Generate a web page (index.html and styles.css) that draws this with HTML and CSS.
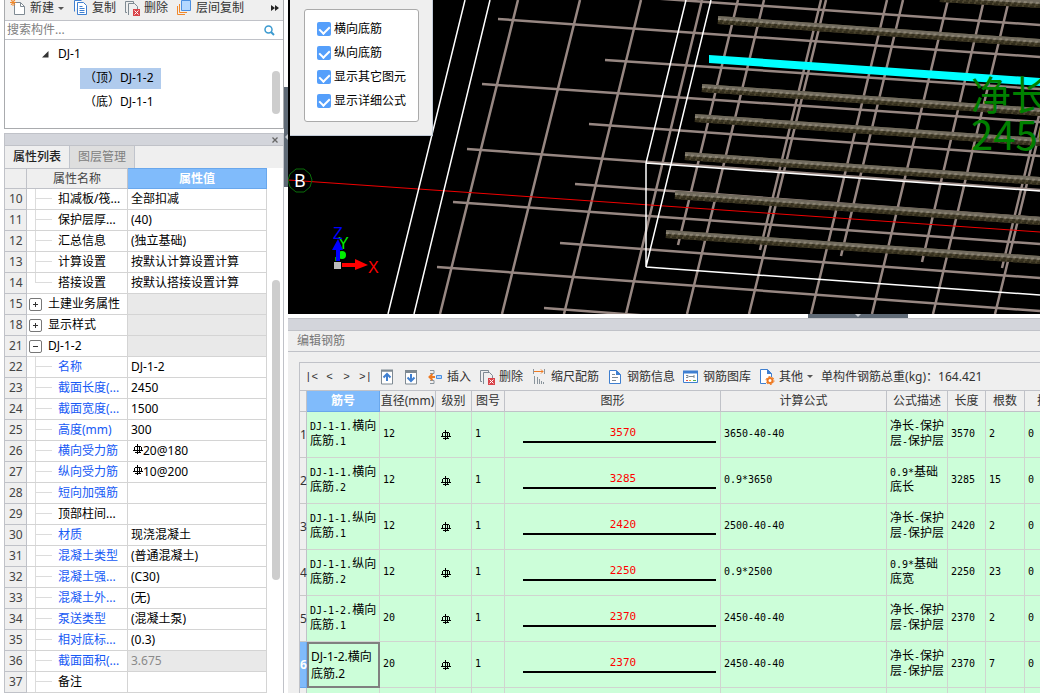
FILE: index.html
```html
<!DOCTYPE html>
<html lang="zh-CN">
<head>
    <meta charset="UTF-8">
    <meta name="viewport" content="width=device-width, initial-scale=1.0">
    <title>编辑钢筋</title>
    <link rel="stylesheet" href="styles.css">
</head>
<body>
    <svg class="defs" width="0" height="0" aria-hidden="true">
        <!-- rebar grade mark -->
        <symbol id="grade" viewBox="0 0 10 10">
            <path d="M4.500 0v10M6.500 2v7M2 2.500h6M1.500 3v3M8.500 3v3M0 6.500h10M2 8.500h6" fill="none" stroke="currentColor" stroke-width="1"/>
        </symbol>
        <symbol id="copy" viewBox="0 0 16 16">
            <path d="M2.500 11.500v-11h7M5.500 2.500h6l3 3v9h-9z" fill="#fff" stroke="#3f7fd0"/>
            <path d="M7.500 6.500h3M7.500 8.500h5M7.500 10.500h5M7.500 12.500h5" stroke="#3f7fd0"/>
        </symbol>
        <symbol id="delete" viewBox="0 0 16 16">
            <path d="M3 12.500H1.500v-11h8v2M4.500 15V3.500h6l3 3V9" fill="none" stroke="#7f8a93"/>
            <path d="M9 9h7v7H9z" fill="#d9444a"/>
            <path d="M10.500 10.500l4 4M14.500 10.500l-4 4" stroke="#fff"/>
        </symbol>
    </svg>

    <div class="workspace">
        <aside class="left-panel">
            <section class="component-list">
                <div class="list-toolbar">
                    <button type="button" class="tool-btn">
                        <svg width="16" height="16" viewBox="0 0 16 16"><path d="M4.500 2.500h6l4 4v8h-10z" fill="#fff" stroke="#7f8a93"/><path d="M10.500 2.500v4h4" fill="none" stroke="#7f8a93"/><path d="M1 0l4 5M5 0L1 5M3-1v7M0 2.500h6" stroke="#f0882c"/></svg>
                        新建
                        <span class="caret"></span>
                    </button>
                    <button type="button" class="tool-btn"><svg width="16" height="16"><use href="#copy"/></svg>复制</button>
                    <button type="button" class="tool-btn"><svg width="16" height="16"><use href="#delete"/></svg>删除</button>
                    <button type="button" class="tool-btn">
                        <svg width="16" height="16" viewBox="0 0 16 16"><path d="M5.500 0.500h9v10h-9z" fill="#b3d7ff" stroke="#4a8ee0"/><path d="M3.500 4v8.500H11M1.500 6v8.500H9" fill="none" stroke="#f0882c"/></svg>
                        层间复制
                    </button>
                    <button type="button" class="more-btn" aria-label="更多">
                        <svg width="8" height="6" viewBox="0 0 8 6"><path d="M0 0l4 3-4 3zM4 0l4 3-4 3z" fill="#222"/></svg>
                    </button>
                </div>
                <div class="search">
                    <input type="text" class="search-input" placeholder="搜索构件..." aria-label="搜索构件">
                    <svg width="11" height="11" viewBox="0 0 11 11"><circle cx="4.500" cy="4.500" r="3.500" fill="none" stroke="#3b9ad0" stroke-width="1.500"/><path d="M7 7l3 3" stroke="#3b9ad0" stroke-width="2"/></svg>
                </div>
                <div class="tree">
                    <div class="tree-row tree-parent">
                        <svg width="7" height="7" viewBox="0 0 7 7"><path d="M6.500 0v6.500H0z" fill="#333"/></svg>
                        DJ-1
                    </div>
                    <div class="tree-row tree-child"><span class="tree-item selected">（顶）DJ-1-2</span></div>
                    <div class="tree-row tree-child"><span class="tree-item">（底）DJ-1-1</span></div>
                    <div class="scroll-thumb tree-thumb"></div>
                </div>
            </section>

            <section class="properties">
                <div class="panel-bar">
                    <button type="button" class="close-btn" aria-label="关闭"><svg width="6" height="6" viewBox="0 0 6 6"><path d="M0.500 0.500l5 5M5.500 0.500l-5 5" stroke="#666" stroke-width="1.300"/></svg></button>
                </div>
                <div class="tabs">
                    <button type="button" class="tab active">属性列表</button>
                    <button type="button" class="tab">图层管理</button>
                </div>
                <div class="property-body">
                    <table class="property-table">
                        <colgroup><col class="c-num"><col class="c-name"><col class="c-value"></colgroup>
                        <thead>
                            <tr><th></th><th>属性名称</th><th class="active">属性值</th></tr>
                        </thead>
                        <tbody>
                            <tr><th>10</th><td class="leaf">扣减板/筏...</td><td>全部扣减</td></tr>
                            <tr><th>11</th><td class="leaf">保护层厚...</td><td>(40)</td></tr>
                            <tr><th>12</th><td class="leaf">汇总信息</td><td>(独立基础)</td></tr>
                            <tr><th>13</th><td class="leaf">计算设置</td><td>按默认计算设置计算</td></tr>
                            <tr><th>14</th><td class="leaf last">搭接设置</td><td>按默认搭接设置计算</td></tr>
                            <tr><th>15</th><td class="group"><button type="button" class="expander" aria-label="展开"></button>土建业务属性</td><td class="disabled"></td></tr>
                            <tr><th>18</th><td class="group"><button type="button" class="expander" aria-label="展开"></button>显示样式</td><td class="disabled"></td></tr>
                            <tr><th>21</th><td class="group"><button type="button" class="expander open" aria-label="收起"></button>DJ-1-2</td><td class="disabled"></td></tr>
                            <tr><th>22</th><td class="leaf key">名称</td><td>DJ-1-2</td></tr>
                            <tr><th>23</th><td class="leaf key">截面长度(...</td><td>2450</td></tr>
                            <tr><th>24</th><td class="leaf key">截面宽度(...</td><td>1500</td></tr>
                            <tr><th>25</th><td class="leaf key">高度(mm)</td><td>300</td></tr>
                            <tr><th>26</th><td class="leaf key">横向受力筋</td><td><svg class="grade" width="10" height="10"><use href="#grade"/></svg>20@180</td></tr>
                            <tr><th>27</th><td class="leaf key">纵向受力筋</td><td><svg class="grade" width="10" height="10"><use href="#grade"/></svg>10@200</td></tr>
                            <tr><th>28</th><td class="leaf key">短向加强筋</td><td></td></tr>
                            <tr><th>29</th><td class="leaf">顶部柱间...</td><td></td></tr>
                            <tr><th>30</th><td class="leaf key">材质</td><td>现浇混凝土</td></tr>
                            <tr><th>31</th><td class="leaf key">混凝土类型</td><td>(普通混凝土)</td></tr>
                            <tr><th>32</th><td class="leaf key">混凝土强...</td><td>(C30)</td></tr>
                            <tr><th>33</th><td class="leaf key">混凝土外...</td><td>(无)</td></tr>
                            <tr><th>34</th><td class="leaf key">泵送类型</td><td>(混凝土泵)</td></tr>
                            <tr><th>35</th><td class="leaf key">相对底标...</td><td>(0.3)</td></tr>
                            <tr><th>36</th><td class="leaf key">截面面积(...</td><td class="disabled">3.675</td></tr>
                            <tr><th>37</th><td class="leaf">备注</td><td></td></tr>
                        </tbody>
                    </table>
                    <div class="scroll-thumb property-thumb"></div>
                </div>
            </section>
        </aside>

        <div class="splitter-v">
            <button type="button" class="splitter-handle-v" aria-label="折叠左侧"><svg width="4" height="6" viewBox="0 0 4 6"><path d="M4 0v6L1 3z" fill="#c5cad0"/></svg></button>
        </div>

        <main class="main">
            <div class="scene">
                <svg class="scene-canvas" viewBox="288 0 752 314" preserveAspectRatio="xMinYMin slice">
                    <defs>
                        <path id="bars" d="M940-2L1040 4M718 20L1040 43M702 88L1040 112M695 118L1040 142M685 156L1040 181M675 195L1040 221M666 234L1040 260"/>
                    </defs>
                    <g stroke="#978782" stroke-width="2.500">
                        <path d="M518 0L440 314M580 0L502 314M641 0L564 314M702 0L626 314M764 0L687 314M826 0L749 314M887 0L811 314M948 0L872 314M1009 0L933 314M1072 0L995 314"/>
                        <path d="M738 0L678 245M821 0L760 250M903 0L841 256M984 0L922 262M1067 0L1002 268"/>
                        <path d="M620-4L1040 25M498 19L1040 57M605 60L1040 89M482 84L1040 122M589 124L1040 156M467 149L1040 190M575 184L1040 218M453 202L1040 244M560 243L1040 278M437 267L1040 311M544 308L1040 345"/>
                    </g>
                    <path d="M288 180L1040 232" stroke="#f00000" stroke-width="1"/>
                    <!-- footing outline -->
                    <path d="M465 0L388 314M490 0L414 314M686 0L646 163V267L711 0M646 163L1040 191M646 267L1040 295" fill="none" stroke="#fff" stroke-width="1.500"/>
                    <!-- ribbed bars: body, lit top, ribs -->
                    <g fill="none">
                        <use href="#bars" stroke="#4c452f" stroke-width="8"/>
                        <use href="#bars" y="-2" stroke="#716b5e" stroke-width="4"/>
                        <use href="#bars" y="-1" stroke="#8b8474" stroke-width="2" stroke-dasharray="3 3"/>
                        <use href="#bars" x="2" y="1" stroke="#35301f" stroke-width="2" stroke-dasharray="3 3"/>
                        <use href="#bars" y="3" stroke="#302b1a" stroke-width="2" stroke-dasharray="4 2"/>
                    </g>
                    <path d="M709 55L1040 78v8L709 63z" fill="#00ffff"/>
                    <g class="formula">
                        <text x="971" y="110">净长</text>
                        <text x="971" y="150">2450</text>
                    </g>
                    <!-- axis B -->
                    <path d="M296 169h8l6 5 2 6-2 7-6 5h-8l-6-5-2-7 2-6z" fill="none" stroke="#0a6e0a"/>
                    <text class="axis-name" x="294" y="187">B</text>
                    <!-- coordinate gizmo -->
                    <g class="gizmo">
                        <text x="338" y="249" fill="#00f000">Y</text>
                        <circle cx="342" cy="255" r="4" fill="#00f000"/>
                        <path d="M335 257h3v4h-3z" fill="#00a000"/>
                        <text x="333" y="239" fill="#0000ff">Z</text>
                        <path d="M336 261v-11h-4l6-11 5 11h-3v11z" fill="#0000ff"/>
                        <path d="M342 263h13v-4l13 6-13 5v-3h-13z" fill="#ff0000"/>
                        <path d="M334 262h7v7h-7z" fill="#bbb"/>
                        <text x="368" y="273" fill="#ff0000">X</text>
                    </g>
                </svg>
                <div class="display-panel">
                    <div class="display-options">
                        <label class="option"><input type="checkbox" checked>横向底筋</label>
                        <label class="option"><input type="checkbox" checked>纵向底筋</label>
                        <label class="option"><input type="checkbox" checked>显示其它图元</label>
                        <label class="option"><input type="checkbox" checked>显示详细公式</label>
                    </div>
                </div>
            </div>

            <div class="splitter-h">
                <button type="button" class="splitter-handle-h" aria-label="折叠底部"><svg width="6" height="4" viewBox="0 0 6 4"><path d="M0 0h6L3 3z" fill="#c5cad0"/></svg></button>
            </div>

            <section class="rebar-editor">
                <div class="panel-bar"></div>
                <h2 class="editor-title">编辑钢筋</h2>
                <div class="editor-body">
                    <div class="editor-toolbar">
                        <button type="button" class="nav-btn wide">|&lt;</button>
                        <button type="button" class="nav-btn">&lt;</button>
                        <button type="button" class="nav-btn">&gt;</button>
                        <button type="button" class="nav-btn wide">&gt;|</button>
                        <button type="button" class="tool-btn" aria-label="上移"><svg width="16" height="16" viewBox="0 0 16 16"><path d="M2.500 2h11v13h-11z" fill="#fff" stroke="#7f8a93"/><path d="M2 1.500h12" stroke="#7f8a93" stroke-width="2"/><path d="M8 12V6M4.500 8.500L8 5l3.500 3.500" fill="none" stroke="#3f7fd0" stroke-width="2"/></svg></button>
                        <button type="button" class="tool-btn" aria-label="下移"><svg width="16" height="16" viewBox="0 0 16 16"><path d="M2.500 2h11v13h-11z" fill="#fff" stroke="#7f8a93"/><path d="M2 2.500h12" stroke="#7f8a93" stroke-width="3"/><path d="M8 5v6M4.500 8.500L8 12l3.500-3.500" fill="none" stroke="#3f7fd0" stroke-width="2"/></svg></button>
                        <button type="button" class="tool-btn"><svg width="16" height="16" viewBox="0 0 16 16"><path d="M3 1.500h4v3H3M3 14.500h4v-3H3" fill="none" stroke="#8a949c"/><path d="M9.500 6.500h5v3h-5z" fill="#b3d7ff" stroke="#4a8ee0"/><path d="M8 8H3M5.500 5L2.500 8l3 3" fill="none" stroke="#ee7a22" stroke-width="2"/></svg>插入</button>
                        <button type="button" class="tool-btn"><svg width="16" height="16"><use href="#delete"/></svg>删除</button>
                        <button type="button" class="tool-btn"><svg width="16" height="16" viewBox="0 0 16 16"><path d="M3.500 7v8M6.500 8v7M8.500 10v5M10.500 12v3M12.500 13v2" stroke="#8a949c"/><path d="M2.500 0v5M13.500 0v5" stroke="#8a949c"/><path d="M3 2.500h9M10 0.500l2 2-2 2" fill="none" stroke="#ee7a22"/></svg>缩尺配筋</button>
                        <button type="button" class="tool-btn"><svg width="16" height="16" viewBox="0 0 16 16"><path d="M2.500 1.500h7l4 4v9h-11z" fill="#fff" stroke="#3f7fd0"/><path d="M9 1v5h5z" fill="#3f7fd0"/><path d="M5 5.500h3M5 8.500h6M5 11.500h4" stroke="#7f8a93"/></svg>钢筋信息</button>
                        <button type="button" class="tool-btn"><svg width="16" height="16" viewBox="0 0 16 16"><path d="M0.500 2.500h14v11h-14z" fill="#fff" stroke="#3f7fd0"/><path d="M0 3h15" stroke="#3f7fd0" stroke-width="3"/><path d="M3 6.500h2v2H3M6 7.500h5M11 6v3" fill="none" stroke="#7f8a93"/><path d="M3 11.500h2" stroke="#e05050"/><path d="M6 11.500h2" stroke="#e0b030"/><path d="M10 11.500h3" stroke="#50b050"/></svg>钢筋图库</button>
                        <button type="button" class="tool-btn">
                            <svg width="16" height="16" viewBox="0 0 16 16"><path d="M7 14.500H1.500v-14h7l4 4V8" fill="#fff" stroke="#3f7fd0"/><path d="M8 0v5h5z" fill="#3f7fd0"/><circle cx="11" cy="11.500" r="2.500" fill="#fff" stroke="#ee7a22" stroke-width="2"/><circle cx="11" cy="11.500" r="4" fill="none" stroke="#ee7a22" stroke-dasharray="2 2.200"/></svg>
                            其他
                            <span class="caret"></span>
                        </button>
                        <span class="total-weight">单构件钢筋总重(kg)：164.421</span>
                    </div>
                    <table class="rebar-table">
                        <colgroup>
                            <col class="r-index"><col class="r-name"><col class="r-dia"><col class="r-grade"><col class="r-shape-no"><col class="r-shape"><col class="r-formula"><col class="r-desc"><col class="r-length"><col class="r-count"><col class="r-lap">
                        </colgroup>
                        <thead>
                            <tr><th></th><th class="active">筋号</th><th>直径(mm)</th><th>级别</th><th>图号</th><th>图形</th><th>计算公式</th><th>公式描述</th><th>长度</th><th>根数</th><th>搭接</th></tr>
                        </thead>
                        <tbody>
                            <tr>
                                <th>1</th><td>DJ-1-1.<span class="cn">横向底筋</span>.1</td><td>12</td><td class="mark"><svg class="grade" width="10" height="10"><use href="#grade"/></svg></td><td>1</td>
                                <td class="shape"><div class="shape-bar">3570</div></td><td>3650-40-40</td><td><span class="cn">净长</span>-<span class="cn">保护层</span>-<span class="cn">保护层</span></td><td>3570</td><td>2</td><td>0</td>
                            </tr>
                            <tr>
                                <th>2</th><td>DJ-1-1.<span class="cn">横向底筋</span>.2</td><td>12</td><td class="mark"><svg class="grade" width="10" height="10"><use href="#grade"/></svg></td><td>1</td>
                                <td class="shape"><div class="shape-bar">3285</div></td><td>0.9*3650</td><td>0.9*<span class="cn">基础底长</span></td><td>3285</td><td>15</td><td>0</td>
                            </tr>
                            <tr>
                                <th>3</th><td>DJ-1-1.<span class="cn">纵向底筋</span>.1</td><td>12</td><td class="mark"><svg class="grade" width="10" height="10"><use href="#grade"/></svg></td><td>1</td>
                                <td class="shape"><div class="shape-bar">2420</div></td><td>2500-40-40</td><td><span class="cn">净长</span>-<span class="cn">保护层</span>-<span class="cn">保护层</span></td><td>2420</td><td>2</td><td>0</td>
                            </tr>
                            <tr>
                                <th>4</th><td>DJ-1-1.<span class="cn">纵向底筋</span>.2</td><td>12</td><td class="mark"><svg class="grade" width="10" height="10"><use href="#grade"/></svg></td><td>1</td>
                                <td class="shape"><div class="shape-bar">2250</div></td><td>0.9*2500</td><td>0.9*<span class="cn">基础底宽</span></td><td>2250</td><td>23</td><td>0</td>
                            </tr>
                            <tr>
                                <th>5</th><td>DJ-1-2.<span class="cn">横向底筋</span>.1</td><td>20</td><td class="mark"><svg class="grade" width="10" height="10"><use href="#grade"/></svg></td><td>1</td>
                                <td class="shape"><div class="shape-bar">2370</div></td><td>2450-40-40</td><td><span class="cn">净长</span>-<span class="cn">保护层</span>-<span class="cn">保护层</span></td><td>2370</td><td>2</td><td>0</td>
                            </tr>
                            <tr>
                                <th class="active">6</th><td class="editing">DJ-1-2.横向底筋.2</td><td>20</td><td class="mark"><svg class="grade" width="10" height="10"><use href="#grade"/></svg></td><td>1</td>
                                <td class="shape"><div class="shape-bar">2370</div></td><td>2450-40-40</td><td><span class="cn">净长</span>-<span class="cn">保护层</span>-<span class="cn">保护层</span></td><td>2370</td><td>7</td><td>0</td>
                            </tr>
                            <tr><th></th><td></td><td></td><td></td><td></td><td></td><td></td><td></td><td></td><td></td><td></td></tr>
                        </tbody>
                    </table>
                </div>
            </section>
        </main>
    </div>
</body>
</html>
```

FILE: styles.css
```css
* {
    margin: 0;
    padding: 0;
    box-sizing: border-box;
}

body {
    font-family: "Noto Sans", "Noto Sans CJK SC", sans-serif;
    font-size: 12px;
    line-height: 18px;
    color: #333;
    background: #fff;
    overflow: hidden;
}

button {
    font: inherit;
    color: inherit;
    background: none;
    border: none;
    white-space: nowrap;
}

svg {
    display: block;
    flex: none;
}

.defs {
    position: absolute;
}

.workspace {
    display: flex;
    height: 100vh;
}

/* left side */
.left-panel {
    width: 280px;
    margin-left: 4px;
    flex: none;
    display: flex;
    flex-direction: column;
    gap: 4px;
}

.component-list {
    border: 1px solid #a9abae;
    border-top: none;
}

.list-toolbar {
    height: 21px;
    padding: 0 4px 4px 5px;
    display: flex;
    align-items: center;
    gap: 8px;
    background: #efefef;
    border-bottom: 1px solid #c0c2c8;
}

.tool-btn {
    display: flex;
    align-items: center;
    gap: 4px;
}

.caret {
    border: 3px solid transparent;
    border-top-color: #555;
    border-bottom: none;
}

.more-btn {
    margin-left: auto;
}

.search {
    height: 19px;
    padding: 0 8px 0 2px;
    display: flex;
    align-items: center;
    border-bottom: 1px solid #c0c2c8;
}

.search-input {
    flex: 1;
    min-width: 0;
    border: none;
    outline: none;
    font: inherit;
}

.search-input::placeholder {
    color: #808080;
}

.tree {
    height: 88px;
    padding-top: 2px;
    position: relative;
    color: #000;
}

.tree-row {
    height: 24px;
    display: flex;
    align-items: center;
}

.tree-parent {
    padding-left: 37px;
    gap: 9px;
}

.tree-child {
    padding-left: 75px;
}

.tree-item {
    padding: 1px 7px 2px 4px;
}

.tree-item.selected {
    background: #b0cbed;
}

.scroll-thumb {
    position: absolute;
    right: 3px;
    width: 8px;
    border-radius: 4px;
    background: #cdcdcd;
}

.tree-thumb {
    top: 31px;
    height: 43px;
}

.properties {
    flex: 1;
    min-height: 0;
    display: flex;
    flex-direction: column;
    border: 1px solid #c0c2c8;
    border-bottom: none;
}

.panel-bar {
    height: 12px;
    flex: none;
    padding-right: 5px;
    display: flex;
    align-items: center;
    justify-content: flex-end;
    background: #d3d5db;
    border-bottom: 1px solid #c0c2c8;
}

.tabs {
    height: 22px;
    flex: none;
    display: flex;
    background: #efefef;
}

.tab {
    width: 65px;
    color: #808080;
    background: #dedede;
    border-right: 1px solid #c0c4cc;
}

.tab.active {
    color: #222;
    background: #efefef;
    font-weight: 500;
}

.property-body {
    flex: 1;
    min-height: 0;
    overflow: hidden;
    position: relative;
}

.property-table {
    width: 262px;
    table-layout: fixed;
    border-collapse: separate;
    border-spacing: 0;
    color: #000;
}

.c-num {
    width: 22px;
}

.c-name {
    width: 101px;
}

.property-table th,
.property-table td {
    height: 21px;
    border-right: 1px solid #d4d4d4;
    border-bottom: 1px solid #d4d4d4;
    line-height: 18px;
    text-align: left;
    font-weight: normal;
    white-space: nowrap;
}

.property-table th {
    padding-left: 4px;
    color: #444;
    background: #efefef;
    border-color: #c0c2c8;
}

.property-table thead th {
    padding: 0;
    text-align: center;
    border-top: 1px solid #c0c2c8;
}

.property-table th.active,
.rebar-table th.active {
    color: #fff;
    font-weight: bold;
    background: #80bbfb;
    border-color: #69a7ec;
}

.property-table td {
    padding-left: 3px;
}

.property-table td.leaf {
    padding-left: 31px;
    background:
        linear-gradient(#dcdcdc, #dcdcdc) 8px 0 / 1px 100% no-repeat,
        linear-gradient(#dcdcdc, #dcdcdc) 8px 9px / 17px 1px no-repeat;
}

.property-table td.last {
    background-size: 1px 10px, 17px 1px;
}

.property-table td.key {
    color: #1659f5;
}

.property-table td.group {
    padding-left: 2px;
}

.property-table td.disabled {
    color: #8a8a8a;
    background: #e9e9e9;
}

.property-table .grade {
    display: inline-block;
    margin-left: 2px;
    vertical-align: 1px;
}

.expander {
    width: 13px;
    height: 13px;
    margin-right: 6px;
    vertical-align: -2px;
    border: 1px solid #777;
    border-radius: 2px;
    background:
        linear-gradient(#333, #333) center / 5px 1px no-repeat,
        linear-gradient(#333, #333) center / 1px 5px no-repeat;
}

.expander.open {
    background-size: 5px 1px, 0 0;
}

.property-thumb {
    top: 112px;
    height: 300px;
}

/* splitters */
.splitter-v {
    width: 4px;
    flex: none;
    padding-top: 87px;
}

.splitter-handle-v {
    width: 4px;
    height: 100px;
    background: #5f6a76;
}

.splitter-h {
    height: 4px;
    flex: none;
    padding-left: 388px;
    display: flex;
    justify-content: center;
}

.splitter-handle-h {
    width: 100px;
    height: 4px;
    display: flex;
    justify-content: center;
    background: #5f6a76;
}

/* right side */
.main {
    flex: 1;
    min-width: 0;
    display: flex;
    flex-direction: column;
}

.scene {
    height: 314px;
    flex: none;
    position: relative;
    overflow: hidden;
    background: #000;
}

.scene-canvas {
    width: 100%;
    height: 100%;
}

.formula {
    font-family: "Noto Sans CJK SC", sans-serif;
    font-size: 40px;
    fill: #008000;
}

.axis-name {
    font-size: 18px;
    fill: #fff;
}

.gizmo {
    font-family: "Liberation Sans", Arial, sans-serif;
    font-size: 16px;
}

.display-panel {
    position: absolute;
    top: 0;
    left: 2px;
    padding: 9px 13px 13px 14px;
    background: #efefef;
    border: 1px solid #c3ccd8;
    border-top: none;
    border-left: none;
}

.display-options {
    width: 115px;
    padding: 7px 0 8px 12px;
    background: #fff;
    border: 1px solid #aaa;
    border-radius: 3px;
    color: #000;
}

.option {
    height: 24px;
    display: flex;
    align-items: center;
    gap: 3px;
}

.option input {
    appearance: none;
    width: 14px;
    height: 14px;
    border-radius: 2px;
    background: #559ffb;
    display: flex;
    justify-content: center;
}

.option input:checked::after {
    content: "";
    width: 5px;
    height: 8px;
    margin-top: 2px;
    border: solid #fff;
    border-width: 0 2px 2px 0;
    transform: rotate(45deg);
}

.rebar-editor {
    flex: 1;
    min-height: 0;
    display: flex;
    flex-direction: column;
    background: #efefef;
    border-top: 1px solid #c0c2c8;
}

.editor-title {
    height: 21px;
    flex: none;
    padding-left: 9px;
    font-size: 12px;
    font-weight: normal;
    line-height: 20px;
    color: #777;
    border-bottom: 1px solid #c0c2c8;
}

.editor-body {
    flex: 1;
    min-height: 0;
    margin: 10px 0 0 11px;
    overflow: hidden;
    border: 1px solid #c0c2c8;
    border-right: none;
    border-bottom: none;
}

.editor-toolbar {
    height: 27px;
    padding-left: 5px;
    display: flex;
    align-items: center;
    gap: 8px;
}

.nav-btn {
    width: 9px;
    font-family: "Liberation Mono", monospace;
    font-size: 11px;
}

.nav-btn.wide {
    width: 12px;
}

.total-weight {
    white-space: nowrap;
}

.rebar-table {
    width: 774px;
    table-layout: fixed;
    border-collapse: separate;
    border-spacing: 0;
    border-top: 1px solid #c0c2c8;
}

.r-index { width: 7px; }
.r-name { width: 73px; }
.r-dia { width: 56px; }
.r-grade { width: 36px; }
.r-shape-no { width: 33px; }
.r-shape { width: 216px; }
.r-formula { width: 166px; }
.r-desc { width: 61px; }
.r-length { width: 38px; }
.r-count { width: 39px; }

.rebar-table th {
    font-weight: normal;
    background: #efefef;
    border-right: 1px solid #c0c2c8;
    white-space: nowrap;
}

.rebar-table thead th {
    height: 21px;
    border-bottom: 1px solid #c0c2c8;
}

.rebar-table tbody th {
    border-bottom: 1px solid #c8c8c8;
}

.rebar-table td {
    height: 46px;
    padding: 0 1px 2px 3px;
    font-family: "DejaVu Sans Mono", "Noto Sans CJK SC", monospace;
    font-size: 10px;
    line-height: 14px;
    color: #000;
    background: #ccfed9;
    border-right: 1px solid #d0d4d0;
    border-bottom: 1px solid #d0d4d0;
}

.rebar-table .cn {
    font-size: 12px;
}

.rebar-table td.editing {
    padding: 0 0 0 2px;
    border: 2px solid #808080;
    font-family: inherit;
    font-size: 12px;
    line-height: 17px;
}

.rebar-table td.mark {
    padding: 0 0 0 5px;
}

.rebar-table td.shape {
    padding: 0 4px 0 18px;
}

.shape-bar {
    height: 17px;
    padding-left: 7px;
    border-bottom: 2px solid #000;
    font-size: 11px;
    text-align: center;
    color: #f00;
}
```
